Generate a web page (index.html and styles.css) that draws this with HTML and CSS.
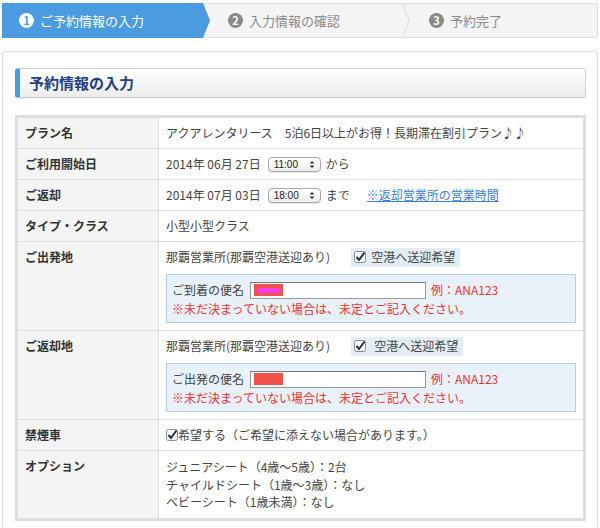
FILE: index.html
```html
<!DOCTYPE html>
<html lang="ja">
<head>
<meta charset="utf-8">
<link rel="stylesheet" href="styles.css">
</head>
<body>
<div class="steps">
  <div class="step step-active"><span class="num">1</span>ご予約情報の入力</div>
  <div class="step step-2"><span class="num">2</span>入力情報の確認
    <svg class="chev" width="10" height="35" viewBox="0 0 10 35"><path d="M1 0 L8 17.5 L1 35" fill="none" stroke="#dcdcdc" stroke-width="1"/></svg>
  </div>
  <div class="step step-3"><span class="num">3</span>予約完了</div>
</div>

<div class="panel">
  <h2 class="heading">予約情報の入力</h2>
  <table class="form">
    <tr>
      <th>プラン名</th>
      <td>アクアレンタリース　5泊6日以上がお得！長期滞在割引プラン♪♪</td>
    </tr>
    <tr>
      <th>ご利用開始日</th>
      <td><span class="inline">2014年 06月 27日 <span class="sel">11:00<svg width="6" height="9" viewBox="0 0 6 9"><path d="M0.5 3.5 L3 1 L5.5 3.5 Z M0.5 5.5 L3 8 L5.5 5.5 Z" fill="#333"/></svg></span> から</span></td>
    </tr>
    <tr>
      <th>ご返却</th>
      <td><span class="inline">2014年 07月 03日 <span class="sel">18:00<svg width="6" height="9" viewBox="0 0 6 9"><path d="M0.5 3.5 L3 1 L5.5 3.5 Z M0.5 5.5 L3 8 L5.5 5.5 Z" fill="#333"/></svg></span> まで <a class="link" href="#">※返却営業所の営業時間</a></span></td>
    </tr>
    <tr>
      <th>タイプ・クラス</th>
      <td>小型小型クラス</td>
    </tr>
    <tr>
      <th class="top">ご出発地</th>
      <td class="top">
        <div class="office">那覇営業所(那覇空港送迎あり)
          <span class="pickup"><svg class="cb" width="12" height="12" viewBox="0 0 12 12"><rect x="0.5" y="0.5" width="11" height="11" rx="2" fill="#fff" stroke="#8a8a8a"/><path d="M2.5 6 L5 9 L10.5 1.5" fill="none" stroke="#1e2b55" stroke-width="2"/></svg>空港へ送迎希望</span>
        </div>
        <div class="flight">
          <div class="frow">ご到着の便名 <span class="inp"><span class="redact"><span class="mag"></span></span></span> <span class="red">例：ANA123</span></div>
          <div class="red note">※未だ決まっていない場合は、未定とご記入ください。</div>
        </div>
      </td>
    </tr>
    <tr>
      <th class="top">ご返却地</th>
      <td class="top">
        <div class="office">那覇営業所(那覇空港送迎あり)
          <span class="pickup wide"><svg class="cb" width="12" height="12" viewBox="0 0 12 12"><rect x="0.5" y="0.5" width="11" height="11" rx="2" fill="#fff" stroke="#8a8a8a"/><path d="M2.5 6 L5 9 L10.5 1.5" fill="none" stroke="#1e2b55" stroke-width="2"/></svg>空港へ送迎希望</span>
        </div>
        <div class="flight">
          <div class="frow">ご出発の便名 <span class="inp"><span class="redact"></span></span> <span class="red">例：ANA123</span></div>
          <div class="red note">※未だ決まっていない場合は、未定とご記入ください。</div>
        </div>
      </td>
    </tr>
    <tr>
      <th>禁煙車</th>
      <td><span class="inline"><svg class="cb" width="12" height="12" viewBox="0 0 12 12"><rect x="0.5" y="0.5" width="11" height="11" rx="2" fill="#fff" stroke="#8a8a8a"/><path d="M2.5 6 L5 9 L10.5 1.5" fill="none" stroke="#1e2b55" stroke-width="2"/></svg>希望する（ご希望に添えない場合があります。）</span></td>
    </tr>
    <tr>
      <th class="top">オプション</th>
      <td class="top opts">
        <div>ジュニアシート（4歳〜5歳）：2台</div>
        <div>チャイルドシート（1歳〜3歳）：なし</div>
        <div>ベビーシート（1歳未満）：なし</div>
      </td>
    </tr>
  </table>
</div>
</body>
</html>
```

FILE: styles.css
```css
html, body {
  margin: 0;
  padding: 0;
  background: #fff;
}
body {
  font-family: "Noto Sans CJK JP", "Noto Sans", sans-serif;
  color: #333;
  font-size: 12px;
  line-height: 16px;
}
.steps {
  margin: 3px 2px 0 2px;
  height: 33px;
  border: 1px solid #dedede;
  border-radius: 2px;
  background: #f4f4f4;
  display: flex;
}
.step {
  display: flex;
  align-items: center;
  font-size: 13px;
  color: #8a8a8a;
  position: relative;
}
.num {
  display: inline-flex;
  align-items: center;
  justify-content: center;
  width: 15px;
  height: 15px;
  border-radius: 50%;
  background: #8a8a8a;
  color: #fff;
  font-weight: bold;
  font-size: 11px;
  margin-right: 6px;
  line-height: 1;
}
.step-active {
  width: 208px;
  margin: -1px 0 -1px -1px;
  padding-left: 17px;
  box-sizing: border-box;
  background: #4a9be0;
  color: #fff;
  clip-path: polygon(0 0, 201px 0, 208px 50%, 201px 100%, 0 100%);
}
.step-active .num {
  background: #fff;
  color: #4a9be0;
}
.step-2 {
  width: 201px;
  padding-left: 18px;
  box-sizing: border-box;
}
.chev {
  position: absolute;
  right: 0;
  top: -1px;
}
.step-3 {
  padding-left: 18px;
}
.panel {
  margin: 13px 2px 0 2px;
  border: 1px solid #dcdcdc;
  border-bottom: none;
  border-radius: 4px 4px 0 0;
  padding: 16px 11px 6px 12px;
}
.heading {
  margin: 0;
  height: 28px;
  border: 1px solid #cfcfcf;
  border-left: 5px solid #4a9be0;
  border-radius: 3px;
  background: linear-gradient(#ffffff, #ececec);
  box-shadow: 0 1px 1px rgba(0,0,0,0.06);
  font-size: 15px;
  line-height: 28px;
  font-weight: bold;
  color: #233f80;
  padding-left: 9px;
}
.form {
  margin-top: 17px;
  width: 100%;
  border-collapse: collapse;
  border: 3px solid #dedede;
}
.form th, .form td {
  border: 1px solid #dedede;
  padding: 7px;
  height: 16px;
  text-align: left;
  vertical-align: middle;
  font-size: 12px;
  line-height: 16px;
}
.form th {
  width: 126px;
  background: #f4f4f4;
  font-weight: bold;
  color: #333;
}
.form td {
  color: #444;
}
.form .top {
  vertical-align: top;
}
.inline {
  display: flex;
  align-items: center;
  height: 16px;
}
.sel {
  display: inline-flex;
  align-items: center;
  justify-content: space-between;
  width: 41px;
  height: 13px;
  margin: 0 5px 0 7px;
  padding: 0 5px;
  border: 1px solid #a9a9a9;
  border-radius: 4px;
  background: linear-gradient(#ffffff, #ececec);
  box-shadow: 0 1px 1px rgba(0,0,0,0.1);
  font-size: 10px;
  line-height: 13px;
  color: #222;
  font-family: "Liberation Sans", sans-serif;
}
.link {
  color: #3c7fdc;
  text-decoration: underline;
  margin-left: 17px;
}
.office {
  display: flex;
  align-items: center;
  height: 20px;
  margin-top: -2px;
}
.pickup {
  display: inline-flex;
  align-items: center;
  gap: 5px;
  margin-left: 21px;
  padding: 0 5px 0 3px;
  height: 19px;
  background: #e3edf6;
}
.pickup.wide {
  gap: 8px;
}
.cb {
  flex: none;
}
.flight {
  margin: 7px 0 0 0;
  border: 1px solid #b7cde1;
  background: #e8f0f8;
  padding: 6px 6px 5px 5px;
}
.frow {
  display: flex;
  align-items: center;
  height: 18px;
}
.inp {
  display: inline-flex;
  align-items: center;
  width: 176px;
  height: 17px;
  margin: 0 5px 0 6px;
  border: 1px solid #999;
  border-top-color: #777;
  background: #fff;
  box-sizing: border-box;
  padding-left: 3px;
}
.redact {
  display: inline-flex;
  align-items: center;
  justify-content: center;
  width: 29px;
  height: 12px;
  background: #f0514b;
}
.mag {
  width: 22px;
  height: 5px;
  background: #f23ee6;
}
.red {
  color: #f0322e;
}
.note {
  margin-top: 2px;
}
.opts div {
  line-height: 17.5px;
}
```
